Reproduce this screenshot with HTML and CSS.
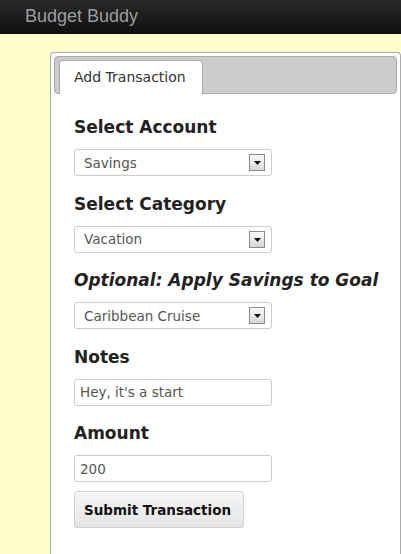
FILE: index.html
```html
<!DOCTYPE html>
<html>
<head>
<meta charset="utf-8">
<title>Budget Buddy</title>
<link rel="stylesheet" href="styles.css">
</head>
<body>
<header class="topbar">Budget Buddy</header>
<main class="panel">
  <nav class="tabbar">
    <div class="tab">Add Transaction</div>
  </nav>
  <form class="tabcontent">
    <div class="group">
      <label class="lbl">Select Account</label>
      <div class="selwrap">
        <select class="ctl sel"><option>Savings</option></select>
        <span class="arrow"><svg width="7" height="4" viewBox="0 0 7 4"><path d="M0 0H7L3.5 4Z" fill="#111"/></svg></span>
      </div>
    </div>
    <div class="group">
      <label class="lbl">Select Category</label>
      <div class="selwrap">
        <select class="ctl sel"><option>Vacation</option></select>
        <span class="arrow"><svg width="7" height="4" viewBox="0 0 7 4"><path d="M0 0H7L3.5 4Z" fill="#111"/></svg></span>
      </div>
    </div>
    <div class="group">
      <label class="lbl lbl-it">Optional: Apply Savings to Goal</label>
      <div class="selwrap">
        <select class="ctl sel"><option>Caribbean Cruise</option></select>
        <span class="arrow"><svg width="7" height="4" viewBox="0 0 7 4"><path d="M0 0H7L3.5 4Z" fill="#111"/></svg></span>
      </div>
    </div>
    <div class="group">
      <label class="lbl">Notes</label>
      <input class="ctl inp" type="text" value="Hey, it's a start">
    </div>
    <div class="group last">
      <label class="lbl">Amount</label>
      <input class="ctl inp" type="text" value="200">
    </div>
    <button class="btn" type="button">Submit Transaction</button>
  </form>
</main>
</body>
</html>
```
FILE: styles.css
```css
html, body {
  margin: 0;
  padding: 0;
}
body {
  background: #ffffcc;
  font-family: "DejaVu Sans", Verdana, sans-serif;
  color: #222;
  width: 401px;
  height: 554px;
  overflow: hidden;
}
.topbar {
  height: 34px;
  line-height: 32px;
  box-sizing: border-box;
  padding-left: 25px;
  background: linear-gradient(#2a2a2a, #0f0f0f);
  color: #9c9c9c;
  font-family: "Liberation Sans", Arial, sans-serif;
  font-size: 18px;
}
.panel {
  display: block;
  box-sizing: border-box;
  margin: 18px 0 0 50px;
  border: 1px solid #aaa;
  border-bottom: none;
  border-radius: 4px 4px 0 0;
  padding: 3px;
  background: #fff;
  height: 502px;
}
.tabbar {
  display: flex;
  background: #cccccc;
  border: 1px solid #aaa;
  border-radius: 4px;
  padding: 3px 3px 0 4px;
  height: 33px;
}
.tab {
  background: #fff;
  border: 1px solid #aaa;
  border-bottom: none;
  border-radius: 4px 4px 0 0;
  padding: 8px 16px 8px 14px;
  font-size: 14px;
  line-height: 17px;
  color: #333;
  margin-bottom: -1px;
  height: 17px;
}
.tabcontent {
  padding: 23px 20px 0 20px;
  margin: 0;
}
.group {
  margin-bottom: 17.5px;
}
.group.last {
  margin-bottom: 9px;
}
.lbl {
  display: block;
  font-weight: bold;
  font-size: 17px;
  line-height: 20px;
  margin-bottom: 12px;
  color: #222;
  white-space: nowrap;
}
.lbl-it {
  font-style: italic;
}
.selwrap {
  position: relative;
  width: 198px;
}
.ctl {
  display: block;
  box-sizing: border-box;
  width: 198px;
  height: 27px;
  border: 1px solid #ccc;
  border-radius: 3px;
  background: #fff;
  font-family: "DejaVu Sans", Verdana, sans-serif;
  font-size: 13.5px;
  color: #555;
  margin: 0;
  outline: none;
}
.sel {
  appearance: none;
  -webkit-appearance: none;
  padding: 0 30px 0 9px;
}
.inp {
  padding: 0 5px;
}
.arrow {
  position: absolute;
  right: 7px;
  top: 5px;
  width: 16px;
  height: 17px;
  box-sizing: border-box;
  border: 1px solid #8a8a8a;
  background: linear-gradient(#fafafa, #d6d6d6);
  display: flex;
  align-items: center;
  justify-content: center;
  pointer-events: none;
}
.arrow svg {
  display: block;
  margin-top: 1px;
}
.btn {
  display: block;
  box-sizing: border-box;
  width: 170px;
  height: 37px;
  border: 1px solid #d0d0d0;
  border-radius: 3px;
  background: linear-gradient(#f6f6f6, #e4e4e4);
  font-family: "DejaVu Sans", Verdana, sans-serif;
  font-weight: bold;
  font-size: 13.5px;
  color: #111;
  padding: 0 0 0 9px;
  text-align: left;
}
```
